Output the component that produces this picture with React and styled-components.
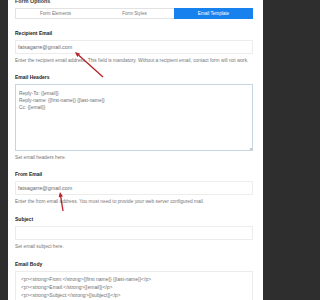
import React from "react";
import styled, { createGlobalStyle } from "styled-components";

const GlobalStyle = createGlobalStyle`
  html, body {
    margin: 0;
    padding: 0;
    background: #2e2e2e;
    font-family: "Liberation Sans", Arial, sans-serif;
  }
`;

const Panel = styled.div`
  position: relative;
  margin-left: 8px;
  width: 238px;
  min-height: 300px;
  padding: 0 10px 0 7px;
  background: #ffffff;
  overflow: hidden;
`;

const Title = styled.div`
  margin-top: -1px;
  height: 5px;
  line-height: 5px;
  font-size: 5.4px;
  font-weight: bold;
  color: #3a3a3a;
`;

const Tabs = styled.div`
  display: flex;
  margin-top: 4px;
  height: 11px;
  border: 1px solid #e2e2e2;
  box-sizing: border-box;
`;

const Tab = styled.div`
  flex: 1;
  display: flex;
  align-items: center;
  justify-content: center;
  font-size: 4.6px;
  color: ${(p) => (p.$active ? "#ffffff" : "#777777")};
  background: ${(p) => (p.$active ? "#1782ee" : "transparent")};
  margin: ${(p) => (p.$active ? "-1px -1px -1px 0" : "0")};
`;

const Field = styled.div`
  margin-top: ${(p) => p.$top || 10}px;
`;

const Label = styled.div`
  height: 6px;
  line-height: 6px;
  font-size: 5px;
  font-weight: bold;
  color: #222222;
  margin-bottom: 4px;
`;

const Input = styled.input`
  display: block;
  box-sizing: border-box;
  width: 100%;
  height: 14px;
  margin: 0;
  padding: 0 2px;
  border: 1px solid #ececec;
  font-family: inherit;
  font-size: 5.4px;
  color: #6a6a6a;
  background: #fff;
  outline: none;
`;

const AreaBox = styled.div`
  position: relative;
`;

const TextArea = styled.textarea`
  display: block;
  box-sizing: border-box;
  width: 100%;
  height: ${(p) => p.$h}px;
  margin: 0;
  padding: ${(p) => p.$pad};
  border: 1px solid ${(p) => p.$border || "#ececec"};
  font-family: inherit;
  font-size: ${(p) => p.$fs}px;
  line-height: ${(p) => p.$lh}px;
  color: #6f6f6f;
  background: #fff;
  outline: none;
  overflow: hidden;
  resize: none;
`;

const Grip = styled.span`
  position: absolute;
  right: 1px;
  bottom: 1px;
  width: 3px;
  height: 3px;
  background: linear-gradient(135deg, transparent 50%, #c8c8c8 50%);
`;

const Help = styled.div`
  margin-top: 4px;
  height: 6px;
  line-height: 6px;
  font-size: 4.8px;
  color: #767676;
  white-space: nowrap;
`;

const Arrows = styled.svg`
  position: absolute;
  left: -8px;
  top: 0;
  width: 267px;
  height: 300px;
  pointer-events: none;
`;

const headers = "Reply-To: {[email]}\nReply-name: {[first-name]} {[last-name]}\nCc: {[email]}";
const body =
  "<p><strong>From:</strong>{[first name]} {[last-name]}</p>\n<p><strong>Email:</strong>{[email]}</p>\n<p><strong>Subject:</strong>{[subject]}</p>\n<p><strong>Message:</strong> {[message]}</p>";

const Arrow = ({ x1, y1, x2, y2 }) => {
  const a = Math.atan2(y2 - y1, x2 - x1);
  const L = 5;
  const W = 2.2;
  const bx = x2 - L * Math.cos(a);
  const by = y2 - L * Math.sin(a);
  const px = -Math.sin(a) * W;
  const py = Math.cos(a) * W;
  return (
    <g>
      <line x1={x1} y1={y1} x2={bx} y2={by} stroke="#b81f27" strokeWidth="1.3" />
      <polygon points={`${x2},${y2} ${bx + px},${by + py} ${bx - px},${by - py}`} fill="#b81f27" />
    </g>
  );
};

export default function App() {
  return (
    <>
      <GlobalStyle />
      <Panel>
        <Title>Form Options</Title>
        <Tabs>
          <Tab>Form Elements</Tab>
          <Tab>Form Styles</Tab>
          <Tab $active>Email Template</Tab>
        </Tabs>

        <Field $top={11}>
          <Label>Recipient Email</Label>
          <Input readOnly value="fatsagarre@gmail.com" />
          <Help>
            Enter the recipient email address. This field is mandatory. Without a recipient email, contact form will not work.
          </Help>
        </Field>

        <Field>
          <Label>Email Headers</Label>
          <AreaBox>
            <TextArea readOnly value={headers} $h={67} $pad="4.5px 3px" $fs={4.9} $lh={7} $border="#c5d6e2" />
            <Grip />
          </AreaBox>
          <Help>Set email headers here.</Help>
        </Field>

        <Field>
          <Label>From Email</Label>
          <Input readOnly value="fatsagarre@gmail.com" />
          <Help>Enter the from email address. You must need to provide your web server configured mail.</Help>
        </Field>

        <Field $top={11}>
          <Label>Subject</Label>
          <Input readOnly value="" />
          <Help>Set email subject here.</Help>
        </Field>

        <Field $top={11}>
          <Label>Email Body</Label>
          <TextArea readOnly value={body} $h={60} $pad="3px 5px" $fs={5} $lh={8} />
        </Field>

        <Arrows viewBox="0 0 267 300">
          <Arrow x1={103} y1={77} x2={75} y2={52} />
          <Arrow x1={63} y1={211} x2={60} y2={192} />
        </Arrows>
      </Panel>
    </>
  );
}
